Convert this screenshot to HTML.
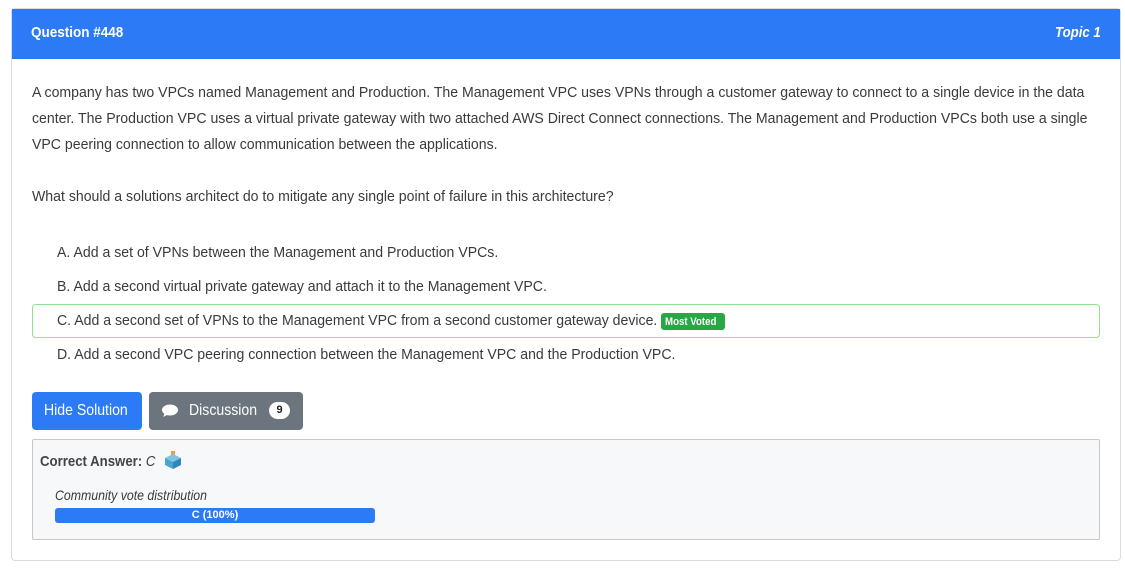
<!DOCTYPE html>
<html><head><style>
*{margin:0;padding:0;box-sizing:border-box}
body{width:1125px;height:569px;background:#fff;font-family:"Liberation Sans",sans-serif;color:#3a3a3a;position:relative;overflow:hidden}
.card{position:absolute;left:11px;top:8px;width:1110px;height:553px;border:1px solid #dcdcdc;border-radius:4px}
.hdr{position:absolute;left:12px;top:9px;width:1108px;height:50px;background:#2c7af6;color:#fff;font-weight:bold;font-size:15px}
.l{position:absolute;white-space:nowrap;transform-origin:0 50%;transform:scaleX(0.88);font-size:15px;line-height:20px}
.b{transform:scaleX(0.94)}
.opt{position:absolute;left:32px;width:1068px;height:34px;border-radius:4px}
.btn{position:absolute;top:392px;height:38px;border-radius:4px;color:#fff}
</style></head><body>
<div class="card"></div>
<div class="hdr"></div>
<div class="l" style="left:31px;top:23px;color:#fff;font-weight:bold;transform:scaleX(0.9)">Question #448</div>
<div class="l" style="left:1055px;top:23px;color:#fff;font-weight:bold;font-style:italic">Topic 1</div>
<div class="l b" style="left:32px;top:83px">A company has two VPCs named Management and Production. The Management VPC uses VPNs through a customer gateway to connect to a single device in the data</div>
<div class="l b" style="left:32px;top:109px">center. The Production VPC uses a virtual private gateway with two attached AWS Direct Connect connections. The Management and Production VPCs both use a single</div>
<div class="l b" style="left:32px;top:135px">VPC peering connection to allow communication between the applications.</div>
<div class="l b" style="left:32px;top:187px">What should a solutions architect do to mitigate any single point of failure in this architecture?</div>
<div class="l b" style="left:57px;top:243px">A. Add a set of VPNs between the Management and Production VPCs.</div>
<div class="l b" style="left:57px;top:277px">B. Add a second virtual private gateway and attach it to the Management VPC.</div>
<div class="opt" style="top:304px;border:1px solid #8fe28f"></div>
<div class="l b" style="left:57px;top:311px">C. Add a second set of VPNs to the Management VPC from a second customer gateway device.</div>
<div style="position:absolute;left:661px;top:313px;width:64px;height:17px;background:#28a745;border-radius:3px"></div>
<div class="l" style="left:665px;top:312px;color:#fff;font-weight:bold;font-size:11px">Most Voted</div>
<div class="l b" style="left:57px;top:345px">D. Add a second VPC peering connection between the Management VPC and the Production VPC.</div>
<div class="btn" style="left:32px;width:110px;background:#2c7af6"></div>
<div class="l" style="left:44px;top:401px;color:#fff;font-size:16px">Hide Solution</div>
<div class="btn" style="left:149px;width:154px;background:#6c757d"></div>
<svg style="position:absolute;left:161px;top:403px" width="18" height="16" viewBox="0 0 18 16"><ellipse cx="9" cy="7" rx="8" ry="5.5" fill="#fff"/><path d="M4 10 L2 14 L8 11 Z" fill="#fff"/></svg>
<div class="l" style="left:189px;top:401px;color:#fff;font-size:16px">Discussion</div>
<div style="position:absolute;left:269px;top:402px;width:21px;height:17px;border-radius:9px;background:#fff;color:#222;font-size:11px;font-weight:bold;text-align:center;line-height:17px">9</div>
<div style="position:absolute;left:32px;top:439px;width:1068px;height:101px;background:#f7f8fa;border:1px solid #c8c8c8;border-radius:2px"></div>
<div class="l" style="left:40px;top:452px;font-weight:bold;color:#444">Correct Answer: <span style="font-weight:normal;font-style:italic">C</span></div>
<svg style="position:absolute;left:163px;top:450px" width="20" height="20" viewBox="0 0 20 20"><rect x="8" y="1" width="4" height="6" fill="#f39c3d"/><path d="M2 8 L10 4 L18 8 L10 12 Z" fill="#7cc3e6"/><path d="M2 8 L10 12 L10 19 L2 15 Z" fill="#4aa3d2"/><path d="M18 8 L10 12 L10 19 L18 15 Z" fill="#2f86b8"/></svg>
<div class="l" style="left:55px;top:485px;font-style:italic;font-size:14px">Community vote distribution</div>
<div style="position:absolute;left:55px;top:508px;width:320px;height:15px;background:#2c7af6;border-radius:3px;color:#fff;font-size:11px;font-weight:bold;text-align:center;line-height:15px">C (100%)</div>
</body></html>
